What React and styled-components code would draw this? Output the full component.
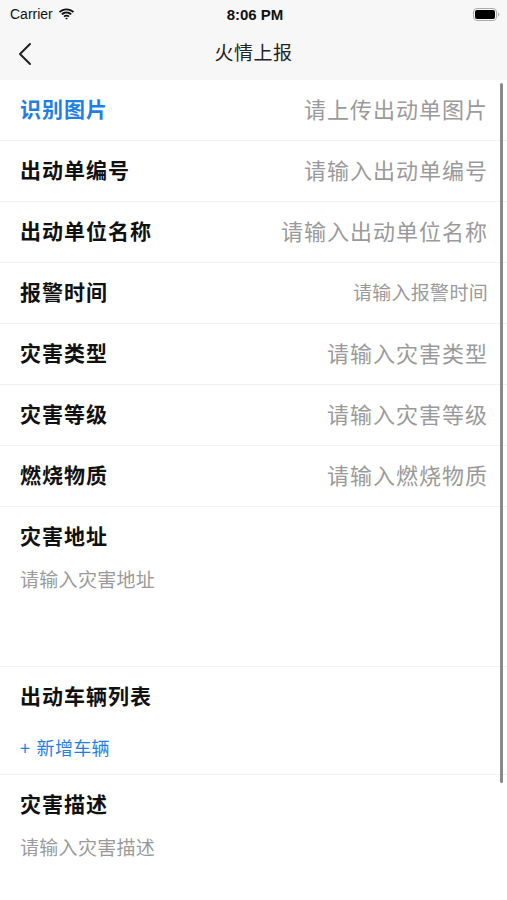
import React from 'react';
import styled, { createGlobalStyle } from 'styled-components';

const GlobalStyle = createGlobalStyle`
  html, body {
    margin: 0;
    padding: 0;
    background: #fff;
  }
  body {
    font-family: "Noto Sans CJK SC", "Noto Sans", sans-serif;
    -webkit-font-smoothing: antialiased;
  }
`;

const Screen = styled.div`
  position: relative;
  width: 507px;
  height: 900px;
  overflow: hidden;
  background: #fff;
  display: flex;
  flex-direction: column;
`;

const Header = styled.header`
  background: #f7f7f7;
  display: flex;
  flex-direction: column;
`;

const StatusBar = styled.div`
  height: 28px;
  display: grid;
  grid-template-columns: 1fr auto 1fr;
  align-items: center;
  padding: 0 7px 0 10px;
  font-family: "Liberation Sans", Arial, sans-serif;
  color: #111;
`;

const Carrier = styled.div`
  display: flex;
  align-items: center;
  gap: 5px;
  font-size: 14px;
`;

const Clock = styled.div`
  font-size: 15px;
  font-weight: 700;
`;

const Battery = styled.div`
  justify-self: end;
  display: flex;
  align-items: center;
`;

const NavBar = styled.div`
  height: 52px;
  display: grid;
  grid-template-columns: 60px 1fr 60px;
  align-items: center;
`;

const BackButton = styled.button`
  border: 0;
  background: none;
  padding: 0 0 0 18px;
  display: flex;
  align-items: center;
  height: 100%;
`;

const Title = styled.h1`
  margin: 0 0 5px;
  text-align: center;
  font-size: 19px;
  font-weight: 400;
  color: #222;
  letter-spacing: 0.5px;
`;

const Form = styled.main`
  display: flex;
  flex-direction: column;
`;

const Row = styled.div`
  height: 60px;
  border-bottom: 1px solid #f2f2f2;
  display: flex;
  align-items: center;
  justify-content: space-between;
  padding: 0 20px 4px;
  box-sizing: border-box;
  height: 61px;
`;

const Label = styled.span`
  font-size: 21px;
  font-weight: 700;
  color: ${p => (p.$accent ? '#1f7fe6' : '#111')};
  letter-spacing: 1px;
`;

const Placeholder = styled.span`
  font-size: ${p => p.$size || 22}px;
  color: #9a9a9a;
  letter-spacing: ${p => (p.$size ? 0.3 : 1)}px;
  margin-right: -1px;
`;

const Block = styled.div`
  height: ${p => p.$height}px;
  border-bottom: ${p => (p.$last ? 'none' : '1px solid #f2f2f2')};
  display: flex;
  flex-direction: column;
  padding: 13px 20px 0;
  box-sizing: border-box;
`;

const BlockLabel = styled(Label)`
  line-height: 30px;
`;

const BlockHint = styled.span`
  margin-top: 16px;
  font-size: 19px;
  line-height: 26px;
  color: #9a9a9a;
  letter-spacing: 0.3px;
`;

const AddLink = styled.span`
  margin-top: 25px;
  font-size: 18px;
  line-height: 24px;
  color: #1f7fe6;
  letter-spacing: 0.3px;
  word-spacing: 2px;
`;

const ScrollThumb = styled.div`
  position: absolute;
  right: 4px;
  top: 83px;
  width: 3px;
  height: 700px;
  border-radius: 2px;
  background: #8a8a8a;
`;

const rows = [
  { label: '识别图片', hint: '请上传出动单图片', accent: true },
  { label: '出动单编号', hint: '请输入出动单编号' },
  { label: '出动单位名称', hint: '请输入出动单位名称' },
  { label: '报警时间', hint: '请输入报警时间', size: 19 },
  { label: '灾害类型', hint: '请输入灾害类型' },
  { label: '灾害等级', hint: '请输入灾害等级' },
  { label: '燃烧物质', hint: '请输入燃烧物质' },
];

export default function App() {
  return (
    <Screen>
      <GlobalStyle />
      <Header>
        <StatusBar>
          <Carrier>
            Carrier
            <svg width="17" height="12" viewBox="0 0 17 12">
              <path d="M8.5 2.2c2.4 0 4.6.9 6.3 2.5l1.3-1.3C14.1 1.5 11.4.4 8.5.4S2.9 1.5.9 3.4l1.3 1.3c1.7-1.6 3.900-2.5 6.3-2.5z" fill="#111" />
              <path d="M8.5 5.4c1.5 0 2.9.6 4 1.6l1.3-1.3C12.4 4.3 10.5 3.6 8.5 3.6S4.6 4.3 3.2 5.7L4.5 7c1.1-1 2.5-1.6 4-1.6z" fill="#111" />
              <path d="M8.5 8.5c.7 0 1.3.3 1.8.7l1.3-1.3c-.8-.8-1.9-1.2-3.1-1.2S6.2 7.1 5.4 7.900l1.3 1.3c.5-.4 1.1-.7 1.8-.7z M8.5 11.6l1.4-1.4c-.4-.3-.9-.5-1.4-.5s-1 .2-1.4.5z" fill="#111" />
            </svg>
          </Carrier>
          <Clock>8:06 PM</Clock>
          <Battery>
            <svg width="27" height="13" viewBox="0 0 27 13">
              <rect x="0.5" y="0.5" width="23" height="12" rx="3.5" fill="none" stroke="#aaa" />
              <rect x="2" y="2" width="20" height="9" rx="2" fill="#000" />
              <path d="M25 4.5v4c.8-.3 1.3-1.1 1.3-2s-.5-1.7-1.3-2z" fill="#aaa" />
            </svg>
          </Battery>
        </StatusBar>
        <NavBar>
          <BackButton aria-label="返回">
            <svg width="14" height="24" viewBox="0 0 14 24">
              <path d="M12 2L2 12l10 10" fill="none" stroke="#222" strokeWidth="2" strokeLinecap="round" strokeLinejoin="round" />
            </svg>
          </BackButton>
          <Title>火情上报</Title>
          <span />
        </NavBar>
      </Header>
      <Form>
        {rows.map(r => (
          <Row key={r.label}>
            <Label $accent={r.accent}>{r.label}</Label>
            <Placeholder $size={r.size}>{r.hint}</Placeholder>
          </Row>
        ))}
        <Block $height={160}>
          <BlockLabel>灾害地址</BlockLabel>
          <BlockHint>请输入灾害地址</BlockHint>
        </Block>
        <Block $height={108}>
          <BlockLabel>出动车辆列表</BlockLabel>
          <AddLink>+ 新增车辆</AddLink>
        </Block>
        <Block $height={130} $last>
          <BlockLabel>灾害描述</BlockLabel>
          <BlockHint>请输入灾害描述</BlockHint>
        </Block>
      </Form>
      <ScrollThumb />
    </Screen>
  );
}
